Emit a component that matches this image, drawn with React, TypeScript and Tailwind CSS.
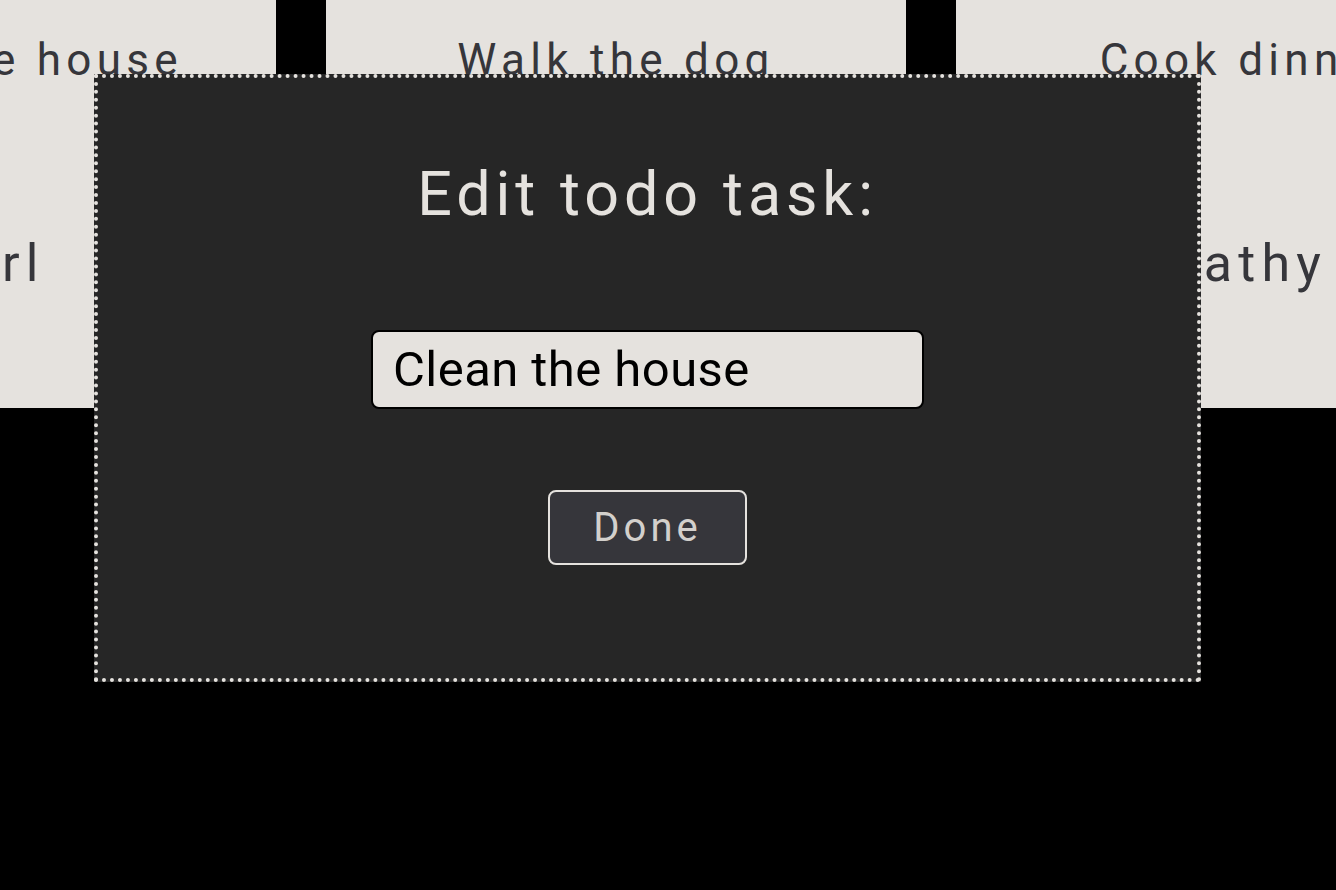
const todos = [
  { task: "Clean the house", who: "Carl" },
  { task: "Walk the dog", who: "Anna" },
  { task: "Cook dinner", who: "Kathy" },
];

function TodoCard({ task, who }: { task: string; who: string }) {
  return (
    <div className="w-[580px] h-[408px] shrink-0 bg-[#e5e2de] flex flex-col items-center pt-[34px] text-[#36363b]">
      <span className="whitespace-nowrap text-[44px] leading-[52px] tracking-[5.3px]">{task}</span>
      <span className="whitespace-nowrap mt-[148px] text-[52px] leading-[60px] tracking-[6.2px]">{who}</span>
    </div>
  );
}

export default function App() {
  return (
    <main className="relative w-[1336px] h-[890px] bg-black overflow-hidden font-['Roboto',sans-serif]">
      {/* cards row, scrolled so the middle one sits just left of centre */}
      <div className="flex gap-[50px] -ml-[304px]">
        {todos.map((t) => (
          <TodoCard key={t.task} task={t.task} who={t.who} />
        ))}
      </div>

      {/* edit modal */}
      <div className="absolute left-[94px] top-[74px] w-[1107px] h-[608px] bg-[#262626] border-4 border-dotted border-[#e5e2de] flex flex-col items-center">
        <h2 className="mt-[80px] text-[61px] leading-[72px] tracking-[4.9px] text-[#e5e2de]">
          Edit todo task:
        </h2>
        <input
          defaultValue="Clean the house"
          className="mt-[100px] w-[553px] h-[79px] rounded-[8px] border-2 border-black bg-[#e5e2de] px-[20px] text-[49px] tracking-[0.45px] text-black outline-none"
        />
        <button className="mt-[81px] w-[199px] h-[75px] rounded-[8px] border-2 border-[#e5e2de] bg-[#36363b] text-[40px] tracking-[4px] text-[#d3d0cc]">
          Done
        </button>
      </div>
    </main>
  );
}
